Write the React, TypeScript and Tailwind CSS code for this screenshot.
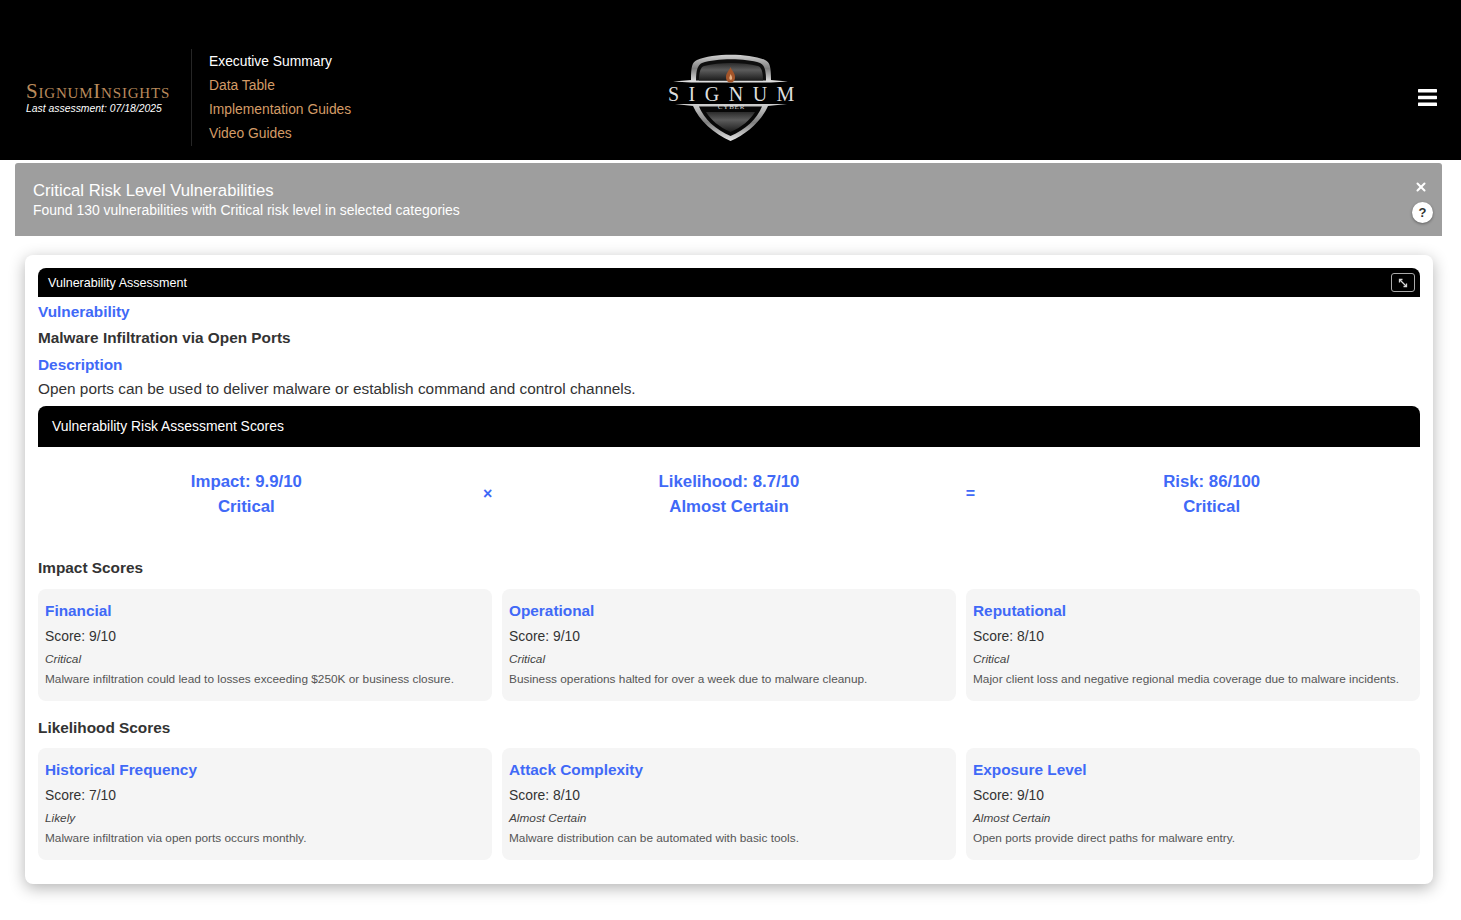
import { X } from "lucide-react";

const sans = "font-['Liberation_Sans',Arial,sans-serif]";

type ScoreCard = { title: string; score: string; level: string; text: string };

const impact: ScoreCard[] = [
  { title: "Financial", score: "Score: 9/10", level: "Critical", text: "Malware infiltration could lead to losses exceeding $250K or business closure." },
  { title: "Operational", score: "Score: 9/10", level: "Critical", text: "Business operations halted for over a week due to malware cleanup." },
  { title: "Reputational", score: "Score: 8/10", level: "Critical", text: "Major client loss and negative regional media coverage due to malware incidents." },
];

const likelihood: ScoreCard[] = [
  { title: "Historical Frequency", score: "Score: 7/10", level: "Likely", text: "Malware infiltration via open ports occurs monthly." },
  { title: "Attack Complexity", score: "Score: 8/10", level: "Almost Certain", text: "Malware distribution can be automated with basic tools." },
  { title: "Exposure Level", score: "Score: 9/10", level: "Almost Certain", text: "Open ports provide direct paths for malware entry." },
];

function Logo() {
  return (
    <svg width="140" height="88" viewBox="0 0 140 88" aria-label="Signum Cyber">
      <defs>
        <linearGradient id="rim" x1="0" y1="0" x2="0" y2="1">
          <stop offset="0" stopColor="#d0d0d0" />
          <stop offset="0.5" stopColor="#7f7f7f" />
          <stop offset="1" stopColor="#e6e6e6" />
        </linearGradient>
        <linearGradient id="plate" x1="0" y1="0" x2="0" y2="1">
          <stop offset="0" stopColor="#2b2b2b" />
          <stop offset="0.4" stopColor="#5c5c5c" />
          <stop offset="1" stopColor="#1c1c1c" />
        </linearGradient>
      </defs>
      <path d="M6 27.5 L24 26 C24 13 25 8 30 6 C46 -1 82 -1 98 6 C103 8 104 13 104 26 L121 27.5 L104 28.5 L24 28.5 Z" fill="url(#rim)" />
      <path d="M29 26.5 C29 15 31 11 35 9 C50 4 78 4 93 9 C97 11 99 15 99 26.5 Z" fill="#0e0e0e" />
      <path d="M32 26.5 C32 17 34 13 37 12 C52 8 76 8 91 12 C94 13 96 17 96 26.5 Z" fill="url(#plate)" />
      <path d="M63.5 13 C65 17 68 19 68 23 C68 27 66 28.5 63.5 28.5 C61 28.5 59 27 59 23 C59 19 62 17 63.5 13 Z" fill="#a4552a" />
      <path d="M63.5 20 C64.5 22 65.5 23 65 25 C64 26.5 62.5 26 62.3 24 C62.3 23 63.1 22 63.5 20 Z" fill="#e6b083" />
      <path d="M8 50 L120 50 L101 52 C95 66 80 80 63.5 87 C47 80 32 66 26 52 Z" fill="url(#rim)" />
      <path d="M32 52.5 L95 52.5 C90 65 78 76 63.5 82 C49 76 37 65 32 52.5 Z" fill="#070707" />
      <path d="M39 58 L88 58 C83 66 75 73 63.5 78 C52 73 44 66 39 58 Z" fill="url(#plate)" />
      <text x="1" y="47" fill="#dedede" fontSize="20" letterSpacing="9.5" fontFamily="Liberation Serif, serif">SIGNUM</text>
      <text x="64.5" y="55" textAnchor="middle" fill="#d8d8d8" fontSize="7" letterSpacing="0.8" fontFamily="Liberation Serif, serif">CYBER</text>
    </svg>
  );
}

function ScoreGrid({ cards }: { cards: ScoreCard[] }) {
  return (
    <div className="grid grid-cols-3 gap-[10px]">
      {cards.map((c) => (
        <div key={c.title} className="h-[112px] rounded-lg bg-[#f5f5f5] px-[7px] pt-[12px]">
          <h4 className="text-[15.36px] leading-[20px] font-bold text-[#4069f7]">{c.title}</h4>
          <p className="mt-[5px] text-[13.9px] leading-[20px] text-[#333]">{c.score}</p>
          <p className="mt-[4px] text-[11.8px] leading-[18px] text-[#444] italic">{c.level}</p>
          <p className="mt-[2px] text-[11.83px] leading-[18px] text-[#555]">{c.text}</p>
        </div>
      ))}
    </div>
  );
}

function Formula({ top, bottom }: { top: string; bottom: string }) {
  return (
    <div className="text-center text-[16.8px] leading-[25px] font-bold text-[#4069f7]">
      <div>{top}</div>
      <div>{bottom}</div>
    </div>
  );
}

export default function App() {
  return (
    <div className={`${sans} min-h-[920px] bg-white`}>
      <header className="flex h-[160px] items-start bg-black">
        <div className="flex h-full w-[191px] shrink-0 flex-col pt-[80px] pl-[26px]">
          <div className="font-['Liberation_Serif',serif] text-[21px] leading-[22px] tracking-[0.8px] whitespace-nowrap text-[#b98a5c] [font-variant:small-caps]">SignumInsights</div>
          <div className="text-[10.4px] leading-[14px] text-white italic">Last assessment: 07/18/2025</div>
        </div>
        <nav className="mt-[49px] flex h-[97px] w-[220px] shrink-0 flex-col border-l border-[#262626] pl-[17px] text-[13.83px] leading-[24px]">
          <a className="text-white">Executive Summary</a>
          <a className="text-[#d39b66]">Data Table</a>
          <a className="text-[#d39b66]">Implementation Guides</a>
          <a className="text-[#d39b66]">Video Guides</a>
        </nav>
        <div className="mt-[54px] ml-[256px]">
          <Logo />
        </div>
        <svg className="mt-[89px] ml-[611px]" width="19" height="17" viewBox="0 0 19 17" aria-label="Menu">
          <rect width="19" height="3.4" rx="0.6" fill="#fff" />
          <rect y="6.8" width="19" height="3.4" rx="0.6" fill="#fff" />
          <rect y="13.6" width="19" height="3.4" rx="0.6" fill="#fff" />
        </svg>
      </header>

      <div className="mt-[3px] ml-[15px] flex h-[73px] w-[1427px] items-start justify-between rounded-t-[3px] bg-[#9e9e9e] pr-[9px] pl-[18px] text-white">
        <div className="pt-[18px]">
          <div className="text-[16.7px] leading-[20px]">Critical Risk Level Vulnerabilities</div>
          <div className="text-[13.95px] leading-[19px]">Found 130 vulnerabilities with Critical risk level in selected categories</div>
        </div>
        <div className="flex flex-col items-center pt-[17px]">
          <X className="mr-[3px] h-[14px] w-[14px]" strokeWidth={3.5} />
          <div className="mt-[8px] flex h-[21px] w-[21px] items-center justify-center rounded-full bg-white text-[13px] font-bold text-[#333] shadow-[0_1px_3px_rgba(0,0,0,0.4)]">?</div>
        </div>
      </div>

      <main className="mx-[25px] mt-[19px] h-[629px] w-[1408px] rounded-lg bg-white p-[13px] shadow-[0_4px_16px_rgba(0,0,0,0.3)]">
        <div className="flex h-[29px] items-center justify-between rounded-t-lg bg-black pr-[5px] pl-[10px] text-[12.55px] text-white">
          <span className="pt-[1px]">Vulnerability Assessment</span>
          <span className="flex h-[19px] w-[24px] items-center justify-center rounded-[3px] border border-[#aaa]">
            <svg width="12" height="12" viewBox="0 0 12 12" fill="none" stroke="#d8d8d8" strokeWidth="1.3">
              <path d="M3 3 L9 9" />
              <path d="M2.5 5.5 V2.5 H5.5" />
              <path d="M9.5 6.5 V9.5 H6.5" />
            </svg>
          </span>
        </div>
        <h3 className="mt-[5px] text-[15.36px] leading-[20px] font-bold text-[#4069f7]">Vulnerability</h3>
        <p className="mt-[6px] text-[15.36px] leading-[20px] font-bold text-[#333]">Malware Infiltration via Open Ports</p>
        <h3 className="mt-[7px] text-[15.36px] leading-[20px] font-bold text-[#4069f7]">Description</h3>
        <p className="mt-[4px] text-[15.36px] leading-[20px] text-[#333]">Open ports can be used to deliver malware or establish command and control channels.</p>
        <div className="mt-[7px] flex h-[41px] items-center rounded-t-lg bg-black pl-[14px] text-[13.9px] text-white">Vulnerability Risk Assessment Scores</div>

        <div className="mt-[22px] grid grid-cols-[1fr_66px_1fr_66px_1fr] items-center">
          <Formula top="Impact: 9.9/10" bottom="Critical" />
          <div className="text-center text-[16px] font-bold text-[#4069f7]">×</div>
          <Formula top="Likelihood: 8.7/10" bottom="Almost Certain" />
          <div className="text-center text-[16px] font-bold text-[#4069f7]">=</div>
          <Formula top="Risk: 86/100" bottom="Critical" />
        </div>

        <h3 className="mt-[39px] mb-[11px] text-[15.36px] leading-[20px] font-bold text-[#333]">Impact Scores</h3>
        <ScoreGrid cards={impact} />
        <h3 className="mt-[17px] mb-[10px] text-[15.36px] leading-[20px] font-bold text-[#333]">Likelihood Scores</h3>
        <ScoreGrid cards={likelihood} />
      </main>
    </div>
  );
}
